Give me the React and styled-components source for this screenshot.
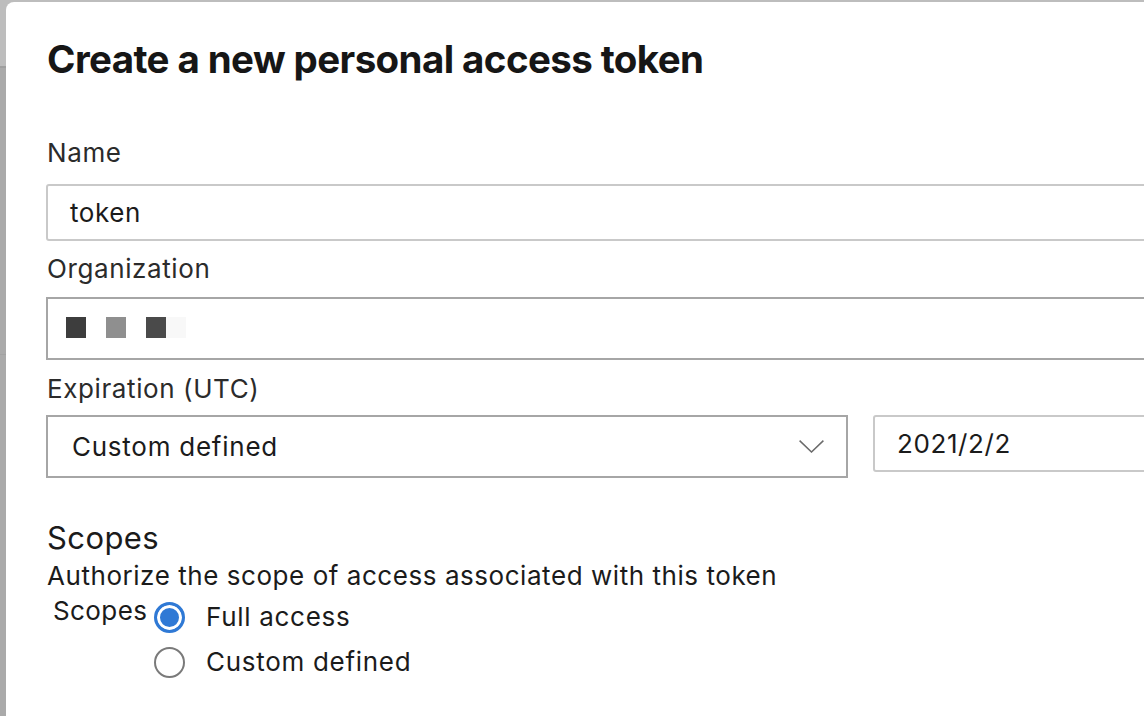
import styled, { createGlobalStyle } from "styled-components"

const GlobalStyle = createGlobalStyle`
  html, body {
    margin: 0;
    padding: 0;
    width: 1144px;
    height: 716px;
    overflow: hidden;
  }
  body {
    font-family: Inter, "Liberation Sans", sans-serif;
    background:
      linear-gradient(#9f9f9f, #9f9f9f) 0 66px / 100% 2px no-repeat,
      linear-gradient(#a2a2a2, #a2a2a2) 0 354px / 100% 1px no-repeat,
      linear-gradient(#bdbdbd, #bdbdbd) 0 0 / 100% 66px no-repeat,
      #aaaaaa;
  }
`

const Backdrop = styled.div`
  padding: 2px 0 0 6px;
  height: 716px;
  box-sizing: border-box;
`

const Dialog = styled.div`
  width: 1260px;
  min-height: 730px;
  background: #fff;
  border-radius: 8px 0 0 0;
  padding: 33px 40px 0 40px;
  box-sizing: border-box;
  color: #1b1b1b;
`

const Title = styled.h1`
  margin: 0 0 54px 1px;
  font-size: 38.5px;
  line-height: 48px;
  font-weight: 700;
  letter-spacing: -0.6px;
  color: #161616;
`

const Label = styled.div`
  font-size: 26px;
  line-height: 32px;
  letter-spacing: 0.6px;
  color: #2b2b2b;
  margin: ${(p) => p.$mt || 0}px 0 ${(p) => p.$mb || 0}px 1px;
`

const TextBox = styled.div`
  display: flex;
  align-items: center;
  height: ${(p) => p.$h}px;
  box-sizing: border-box;
  border: 2px solid ${(p) => (p.$strong ? "#a6a6a6" : "#c9c9c9")};
  border-radius: ${(p) => (p.$strong ? "0" : "3px")};
  padding: 0 22px 0 ${(p) => p.$pl || 22}px;
  font-size: 26px;
  letter-spacing: ${(p) => p.$ls || 0.6}px;
  color: #1b1b1b;
  flex: ${(p) => p.$flex || "none"};
  width: ${(p) => (p.$w ? `${p.$w}px` : "auto")};
`

const Row = styled.div`
  display: flex;
  gap: 25px;
  align-items: flex-start;
`

const Chevron = styled.svg`
  margin-left: auto;
  flex: none;
`

const Masked = styled.div`
  display: flex;
  gap: 20px;
  margin: -2px 0 0 -4px;
`

const Block = styled.span`
  width: 20px;
  height: 21px;
  background: ${(p) => p.$c};
  box-shadow: ${(p) => (p.$tail ? "20px 0 0 #f8f8f8" : "none")};
`

const SectionTitle = styled.h2`
  margin: 41px 0 0 1px;
  font-size: 31px;
  line-height: 38px;
  font-weight: 400;
  letter-spacing: 0.4px;
  color: #1b1b1b;
`

const Description = styled.p`
  margin: 3px 0 0 1px;
  font-size: 26px;
  line-height: 32px;
  letter-spacing: 0.55px;
  color: #1b1b1b;
`

const RadioGroup = styled.div`
  display: flex;
  margin: 3px 0 0 7px;
`

const GroupLabel = styled.div`
  width: 101px;
  flex: none;
  font-size: 26px;
  line-height: 32px;
  letter-spacing: 0.4px;
  color: #1b1b1b;
`

const Options = styled.div`
  display: flex;
  flex-direction: column;
  gap: 13px;
  padding-top: 6px;
`

const Option = styled.label`
  display: flex;
  align-items: center;
  gap: 21px;
  font-size: 26px;
  line-height: 32px;
  letter-spacing: 0.7px;
  color: #1b1b1b;
`

const Radio = styled.span`
  width: 31px;
  height: 31px;
  flex: none;
  box-sizing: border-box;
  border-radius: 50%;
  border: ${(p) => (p.$on ? "3px solid #2f79d5" : "2px solid #7a7a7a")};
  background: ${(p) => (p.$on ? "#2f79d5" : "#fff")};
  box-shadow: ${(p) => (p.$on ? "inset 0 0 0 3px #fff" : "none")};
`

const App = () => {
  return (
    <>
      <GlobalStyle />
      <Backdrop>
        <Dialog>
          <Title>Create a new personal access token</Title>

          <Label $mb={15}>Name</Label>
          <TextBox $h={57}>token</TextBox>

          <Label $mt={12} $mb={12}>Organization</Label>
          <TextBox $h={63} $strong>
            <Masked>
              <Block $c="#3d3d3d" />
              <Block $c="#8f8f8f" />
              <Block $c="#4a4a4a" $tail />
            </Masked>
          </TextBox>

          <Label $mt={13} $mb={10}>Expiration (UTC)</Label>
          <Row>
            <TextBox $h={63} $strong $w={802} $pl={24} $ls={0.75}>
              Custom defined
              <Chevron width="25" height="13" viewBox="0 0 25 13">
                <path d="M0.6 0.6 L12.5 12 L24.4 0.6" fill="none" stroke="#6b6b6b" strokeWidth="1.5" />
              </Chevron>
            </TextBox>
            <TextBox $h={57} $flex="1">2021/2/2</TextBox>
          </Row>

          <SectionTitle>Scopes</SectionTitle>
          <Description>Authorize the scope of access associated with this token</Description>
          <RadioGroup>
            <GroupLabel>Scopes</GroupLabel>
            <Options>
              <Option>
                <Radio $on />
                Full access
              </Option>
              <Option>
                <Radio />
                Custom defined
              </Option>
            </Options>
          </RadioGroup>
        </Dialog>
      </Backdrop>
    </>
  )
}

export default App
